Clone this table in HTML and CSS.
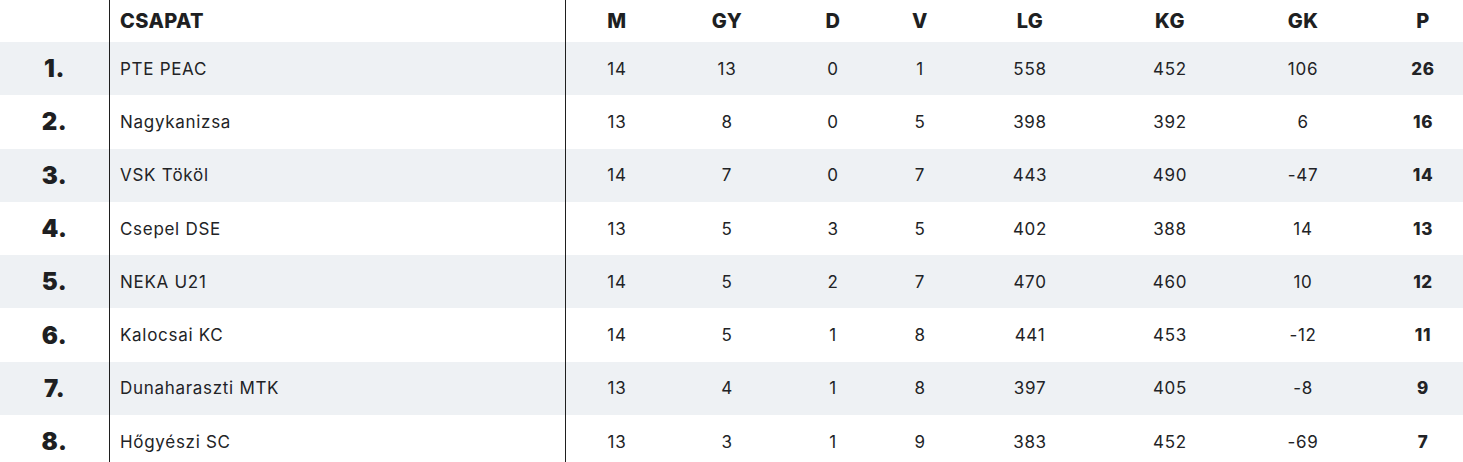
FILE: index.html
```html
<!DOCTYPE html>
<html lang="hu">
<head>
<meta charset="utf-8">
<title>Tabella</title>
<link rel="stylesheet" href="styles.css">
</head>
<body>
<div class="standings">
  <div class="row head">
    <div class="c rank"></div>
    <div class="c team">CSAPAT</div>
    <div class="c">M</div>
    <div class="c">GY</div>
    <div class="c">D</div>
    <div class="c">V</div>
    <div class="c">LG</div>
    <div class="c">KG</div>
    <div class="c">GK</div>
    <div class="c pts">P</div>
  </div>
  <div class="row alt">
    <div class="c rank">1.</div><div class="c team">PTE PEAC</div>
    <div class="c">14</div><div class="c">13</div><div class="c">0</div><div class="c">1</div>
    <div class="c">558</div><div class="c">452</div><div class="c">106</div><div class="c pts">26</div>
  </div>
  <div class="row">
    <div class="c rank">2.</div><div class="c team">Nagykanizsa</div>
    <div class="c">13</div><div class="c">8</div><div class="c">0</div><div class="c">5</div>
    <div class="c">398</div><div class="c">392</div><div class="c">6</div><div class="c pts">16</div>
  </div>
  <div class="row alt">
    <div class="c rank">3.</div><div class="c team">VSK Tököl</div>
    <div class="c">14</div><div class="c">7</div><div class="c">0</div><div class="c">7</div>
    <div class="c">443</div><div class="c">490</div><div class="c">-47</div><div class="c pts">14</div>
  </div>
  <div class="row">
    <div class="c rank">4.</div><div class="c team">Csepel DSE</div>
    <div class="c">13</div><div class="c">5</div><div class="c">3</div><div class="c">5</div>
    <div class="c">402</div><div class="c">388</div><div class="c">14</div><div class="c pts">13</div>
  </div>
  <div class="row alt">
    <div class="c rank">5.</div><div class="c team">NEKA U21</div>
    <div class="c">14</div><div class="c">5</div><div class="c">2</div><div class="c">7</div>
    <div class="c">470</div><div class="c">460</div><div class="c">10</div><div class="c pts">12</div>
  </div>
  <div class="row">
    <div class="c rank">6.</div><div class="c team">Kalocsai KC</div>
    <div class="c">14</div><div class="c">5</div><div class="c">1</div><div class="c">8</div>
    <div class="c">441</div><div class="c">453</div><div class="c">-12</div><div class="c pts">11</div>
  </div>
  <div class="row alt">
    <div class="c rank">7.</div><div class="c team">Dunaharaszti MTK</div>
    <div class="c">13</div><div class="c">4</div><div class="c">1</div><div class="c">8</div>
    <div class="c">397</div><div class="c">405</div><div class="c">-8</div><div class="c pts">9</div>
  </div>
  <div class="row">
    <div class="c rank">8.</div><div class="c team">Hőgyészi SC</div>
    <div class="c">13</div><div class="c">3</div><div class="c">1</div><div class="c">9</div>
    <div class="c">383</div><div class="c">452</div><div class="c">-69</div><div class="c pts">7</div>
  </div>
</div>
</body>
</html>
```

FILE: styles.css
```css
html, body {
  margin: 0;
  padding: 0;
  background: #ffffff;
}

body {
  font-family: Inter, "Noto Sans", "Liberation Sans", sans-serif;
  color: #222326;
}

.standings {
  width: 1463px;
}

.row {
  display: grid;
  grid-template-columns: 110px 456px 102px 118px 94px 80px 140px 140px 126px 97px;
  height: 53.3px;
  font-size: 17px;
  letter-spacing: 0.7px;
  font-weight: 400;
}

.row.alt {
  background: #eef1f4;
}

.row.head {
  height: 42px;
  font-size: 20px;
  letter-spacing: 0.4px;
  font-weight: 800;
  color: #1e1f22;
}

.c {
  display: flex;
  align-items: center;
  justify-content: center;
  box-sizing: border-box;
}

.rank {
  border-right: 1px solid #1f1f1f;
  font-size: 24px;
  letter-spacing: 0.5px;
  font-weight: 900;
  color: #1e1f22;
}

.team {
  justify-content: flex-start;
  padding-left: 10px;
  border-right: 1px solid #1f1f1f;
}

.pts {
  padding-left: 17px;
  font-weight: 800;
}
```
